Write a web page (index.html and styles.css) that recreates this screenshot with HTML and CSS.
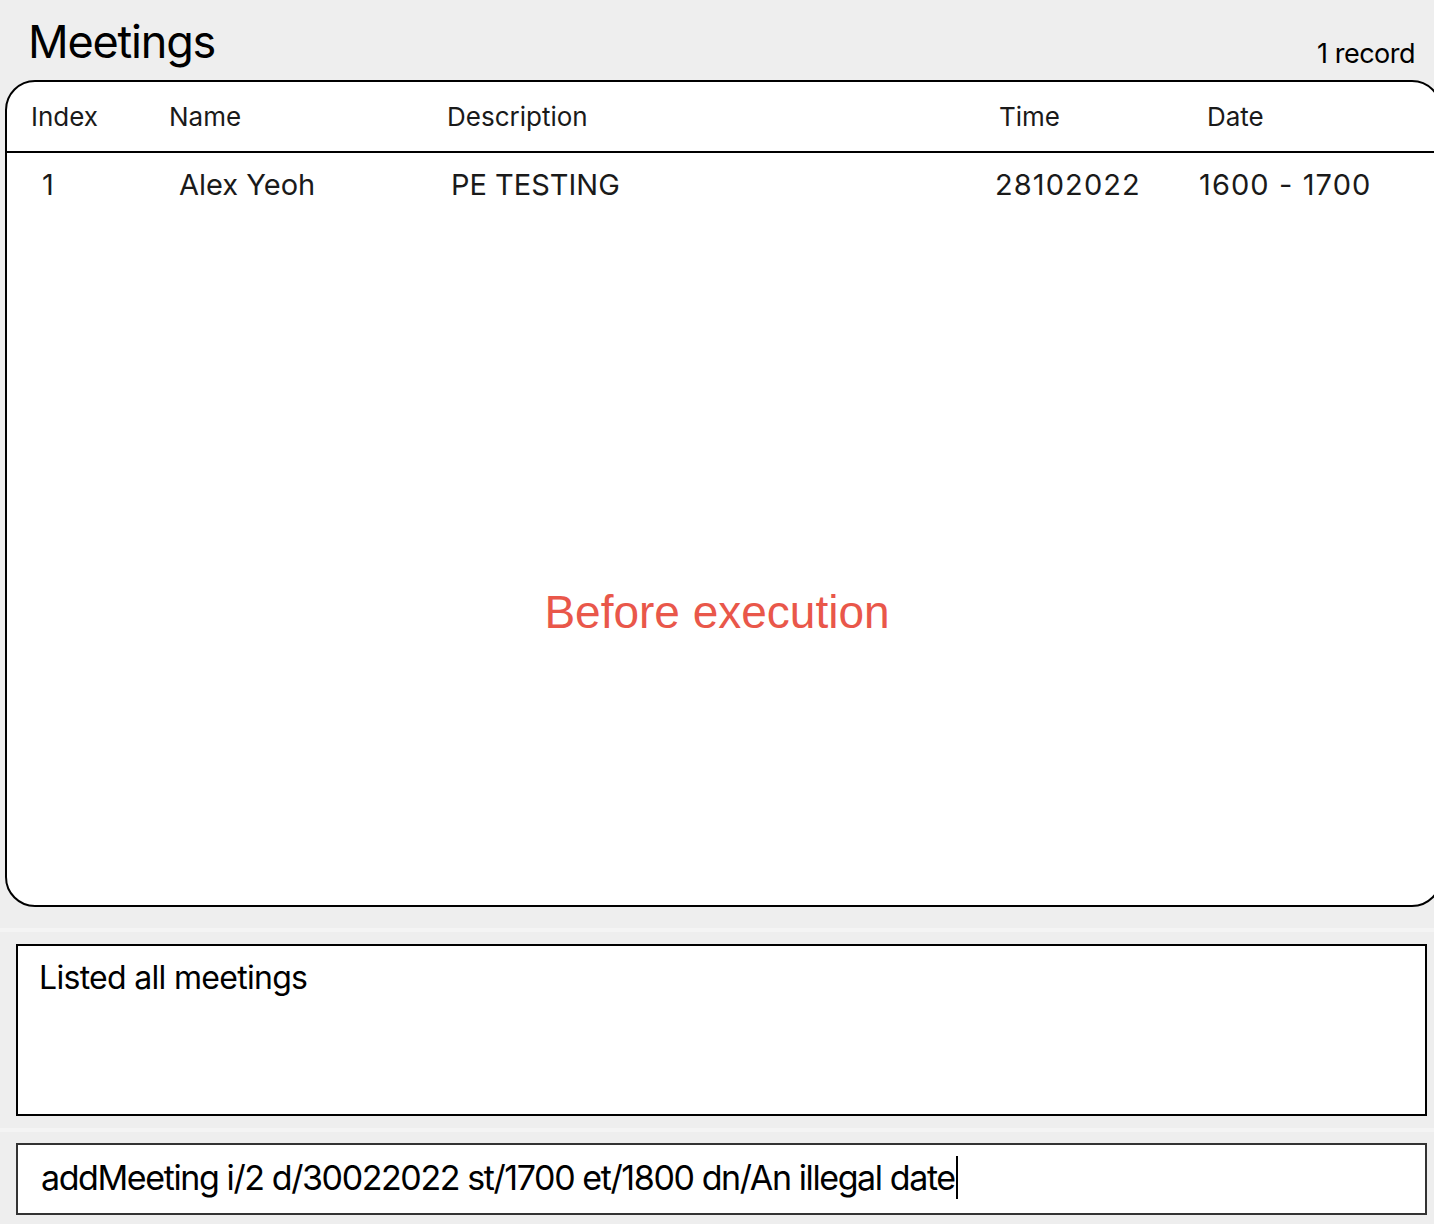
FILE: index.html
```html
<!DOCTYPE html>
<html>
<head>
<meta charset="utf-8">
<link rel="stylesheet" href="styles.css">
</head>
<body>
<div class="app">
  <div class="title-bar">
    <h1 class="title">Meetings</h1>
    <span class="count">1 record</span>
  </div>
  <div class="panel">
    <div class="head-row">
      <span>Index</span>
      <span>Name</span>
      <span>Description</span>
      <span>Time</span>
      <span>Date</span>
    </div>
    <div class="data-row">
      <span>1</span>
      <span>Alex Yeoh</span>
      <span>PE TESTING</span>
      <span class="num">28102022</span>
      <span class="num">1600 - 1700</span>
    </div>
  </div>
  <div class="band band-first"></div>
  <div class="result-wrap">
    <div class="result">Listed all meetings</div>
  </div>
  <div class="band"></div>
  <div class="command-wrap">
    <div class="command">addMeeting i/2 d/30022022 st/1700 et/1800 dn/An illegal date<span class="caret"></span></div>
  </div>
</div>
<div class="overlay">Before execution</div>
</body>
</html>
```
FILE: styles.css
```css
html, body {
  margin: 0;
  padding: 0;
  overflow: hidden;
  background: #eeeeee;
}
body {
  font-family: Inter, "Noto Sans", sans-serif;
  color: #1a1a1a;
  width: 1434px;
  height: 1224px;
  position: relative;
}
.app {
  display: flex;
  flex-direction: column;
}
.title-bar {
  height: 80px;
  display: flex;
  justify-content: space-between;
  align-items: flex-start;
  padding: 0 19px 0 28px;
  box-sizing: border-box;
}
.title {
  margin: 15px 0 0 0;
  font-size: 45px;
  font-weight: 400;
  line-height: 54px;
  color: #000;
  letter-spacing: -1.2px;
}
.count {
  margin-top: 37px;
  font-size: 27px;
  line-height: 34px;
  color: #000;
  letter-spacing: -0.5px;
}
.panel {
  margin-left: 5px;
  width: 1437px;
  height: 827px;
  box-sizing: border-box;
  border: 2px solid #000;
  border-radius: 30px;
  background: #fff;
  overflow: hidden;
}
.head-row {
  display: grid;
  grid-template-columns: 138px 278px 552px 208px 1fr;
  padding-left: 24px;
  height: 69px;
  align-items: center;
  border-bottom: 2px solid #000;
  font-size: 26px;
  letter-spacing: 0;
}
.data-row {
  display: grid;
  grid-template-columns: 137px 272px 544px 204px 1fr;
  padding-left: 35px;
  height: 62px;
  align-items: center;
  font-size: 29px;
  letter-spacing: 0;
}
.num {
  letter-spacing: 1.1px;
}
.band {
  height: 4px;
  background: #f4f4f4;
}
.band-first {
  margin-top: 21px;
}
.result-wrap {
  padding: 12px 7px 12px 16px;
}
.result {
  height: 172px;
  box-sizing: border-box;
  border: 2px solid #000;
  background: #fff;
  padding: 12px 0 0 21px;
  font-size: 32px;
  line-height: 40px;
  color: #000;
  letter-spacing: -0.7px;
}
.command-wrap {
  padding: 11px 7px 0 16px;
}
.command {
  height: 72px;
  box-sizing: border-box;
  border: 2px solid #333;
  background: #fff;
  padding: 0 0 3px 23px;
  display: flex;
  align-items: center;
  font-size: 34px;
  color: #000;
  letter-spacing: -1.4px;
  white-space: nowrap;
}
.caret {
  display: inline-block;
  width: 2px;
  height: 43px;
  background: #000;
  margin-left: 1px;
}
.overlay {
  position: absolute;
  left: 0;
  right: 0;
  top: 586px;
  text-align: center;
  font-family: "Liberation Sans", Arial, sans-serif;
  font-size: 46px;
  line-height: 52px;
  color: #e9574a;
}
```
